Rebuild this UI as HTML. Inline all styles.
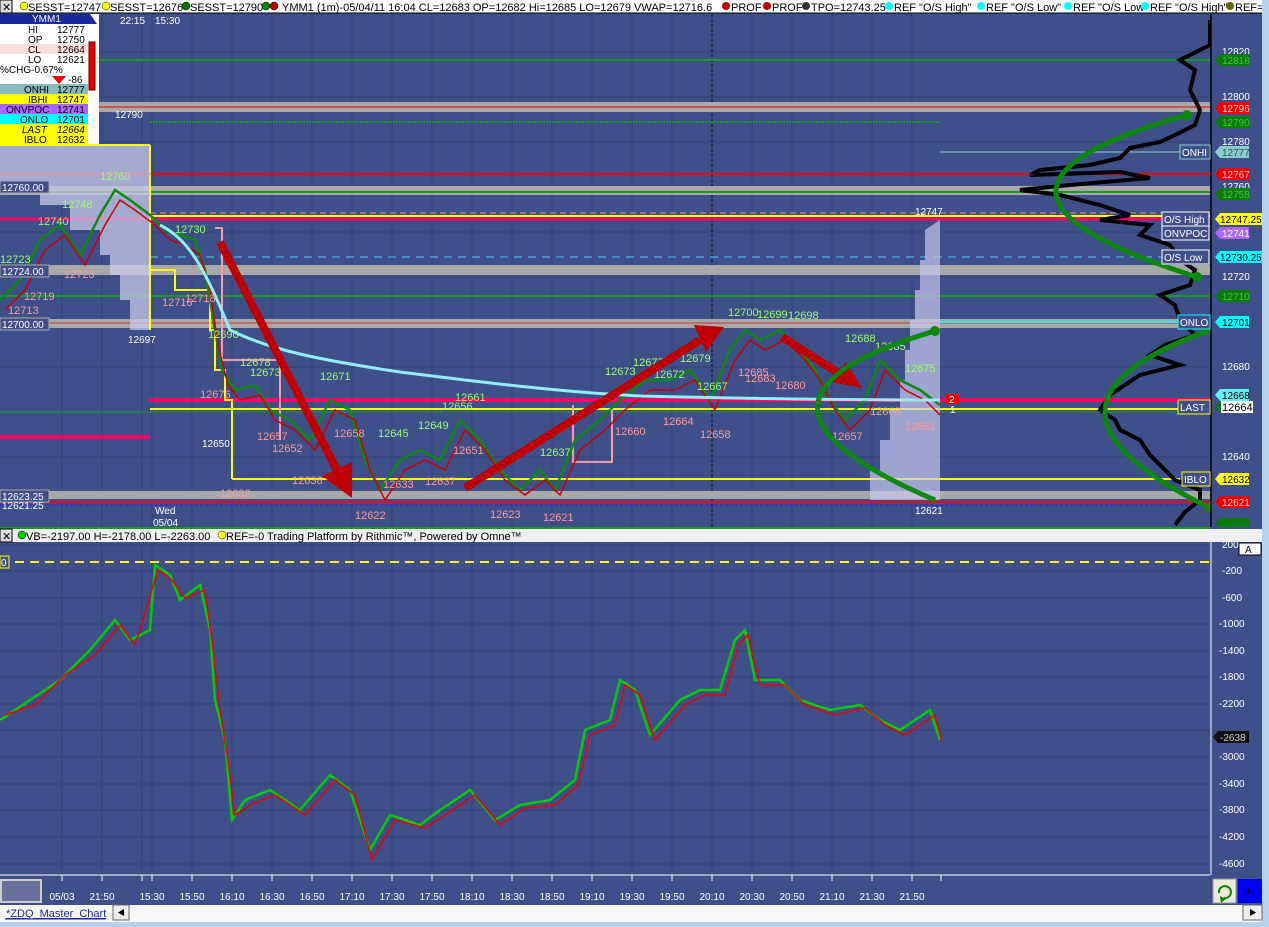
<!DOCTYPE html>
<html><head><meta charset="utf-8"><style>
body{margin:0;width:1269px;height:927px;overflow:hidden;background:#3f4f8a;font-family:"Liberation Sans",sans-serif}
svg{display:block}
text{font-family:"Liberation Sans",sans-serif}
</style></head><body>
<svg width="1269" height="927" viewBox="0 0 1269 927" xmlns="http://www.w3.org/2000/svg">
<rect width="1269" height="927" fill="#3f4f8a"/>
<!-- grids -->
<g stroke="#34427a" stroke-width="1">
<path d="M62 14V875M102 14V875M142 14V875M152 14V875M192 14V875M232 14V875M272 14V875M312 14V875M352 14V875M392 14V875M432 14V875M472 14V875M512 14V875M552 14V875M592 14V875M632 14V875M672 14V875M712 14V875M752 14V875M792 14V875M832 14V875M872 14V875M912 14V875"/>
<path d="M0 52H1210M0 97H1210M0 142H1210M0 187H1210M0 232H1210M0 277H1210M0 322H1210M0 367H1210M0 412H1210M0 457H1210M0 502H1210"/>
<path d="M0 545H1210M0 571H1210M0 598H1210M0 624H1210M0 651H1210M0 677H1210M0 704H1210M0 730H1210M0 757H1210M0 784H1210M0 810H1210M0 837H1210M0 864H1210"/>
</g>
<line x1="712" y1="14" x2="712" y2="527" stroke="#111" stroke-dasharray="3,2"/>
<!-- levels -->
<line x1="0" y1="60" x2="1210" y2="60" stroke="#1a9a1a" stroke-width="2"/>
<rect x="0" y="102" width="1210" height="10" fill="#a8a8a8"/>
<line x1="0" y1="107" x2="1210" y2="107" stroke="#e00" stroke-width="1"/>
<line x1="150" y1="122" x2="940" y2="122" stroke="#1a9a1a" stroke-width="2" stroke-dasharray="2,1"/>
<line x1="940" y1="152" x2="1180" y2="152" stroke="#8cc" stroke-width="1"/>
<line x1="0" y1="174" x2="1210" y2="174" stroke="#f00" stroke-width="2"/>
<rect x="0" y="186" width="1210" height="9" fill="#a8a8a8"/>
<line x1="0" y1="192" x2="1210" y2="192" stroke="#1a9a1a" stroke-width="2"/>
<line x1="150" y1="216" x2="1210" y2="216" stroke="#ff0" stroke-width="2"/>
<line x1="0" y1="219" x2="1210" y2="219" stroke="#f06" stroke-width="3"/>
<line x1="150" y1="213" x2="1210" y2="213" stroke="#e88" stroke-width="1" stroke-dasharray="6,4"/>
<line x1="150" y1="257" x2="1210" y2="257" stroke="#4cf" stroke-width="1" stroke-dasharray="8,6"/>
<rect x="0" y="265" width="1210" height="10" fill="#a8a8a8"/>
<line x1="0" y1="296" x2="1210" y2="296" stroke="#1a9a1a" stroke-width="2"/>
<rect x="0" y="319" width="1210" height="9" fill="#a8a8a8"/>
<line x1="0" y1="323" x2="1210" y2="323" stroke="#c33" stroke-width="1"/>
<line x1="940" y1="322" x2="1180" y2="322" stroke="#0ff" stroke-width="2"/>
<line x1="150" y1="400" x2="1210" y2="400" stroke="#f06" stroke-width="4"/>
<line x1="0" y1="437" x2="150" y2="437" stroke="#f06" stroke-width="4"/>
<line x1="150" y1="409" x2="1180" y2="409" stroke="#ff0" stroke-width="2"/>
<line x1="0" y1="412" x2="1210" y2="412" stroke="#1a9a1a" stroke-width="1"/>
<line x1="232" y1="479" x2="1180" y2="479" stroke="#ff0" stroke-width="2"/>
<rect x="0" y="491" width="1210" height="8" fill="#a8a8a8"/>
<line x1="0" y1="502" x2="1210" y2="502" stroke="#f00" stroke-width="2"/>
<line x1="0" y1="505" x2="1210" y2="505" stroke="#22f" stroke-width="1" stroke-dasharray="3,2"/>
<!-- volume profiles -->
<path d="M0 145H150V330H130V300H120V275H110V255H100V230H70V205H40V185H0Z" fill="#c8c8e8" opacity="0.75"/>
<path d="M940 220V500H870V470H880V440H890V410H900V380H905V350H910V320H915V290H920V260H925V230Z" fill="#c8c8ee" opacity="0.7"/>
<!-- yellow IB -->
<path d="M150 218V270H175V290H210V330H215V370H225V400H232V479" stroke="#ff0" stroke-width="2" fill="none"/>
<path d="M150 145V330M0 145H150" stroke="#ff0" stroke-width="2" fill="none"/>
<path d="M215 228H222V360H280V440M573 405V462H612V410" stroke="#f9a" stroke-width="2" fill="none"/>
<!-- price series -->
<polyline fill="none" stroke="#0b8a0b" stroke-width="2.5" points="0,300 20,280 40,240 60,225 80,255 100,215 115,190 130,200 150,215 165,230 180,235 195,240 205,270 215,330 222,370 235,390 255,385 270,410 290,420 310,440 330,400 350,410 365,460 380,490 400,460 420,450 440,460 460,420 480,440 500,470 520,490 540,470 555,490 575,440 600,420 620,400 645,380 670,380 690,370 710,400 730,350 745,330 760,340 780,330 800,350 815,370 830,400 845,420 865,400 880,360 900,380 920,390 940,405"/>
<polyline fill="none" stroke="#c00" stroke-width="1.5" points="5,310 25,290 45,250 65,235 85,265 105,225 120,200 135,210 155,225 170,240 185,245 200,255 210,290 218,345 228,385 240,400 260,395 275,420 295,430 315,450 335,410 355,420 370,470 385,500 405,470 425,460 445,470 465,430 485,450 505,480 525,495 545,480 560,495 580,450 605,430 625,410 650,390 675,390 695,380 715,410 735,360 750,340 765,350 785,340 805,360 820,380 835,410 850,430 870,410 885,370 905,390 925,400 940,415"/>
<!-- VWAP -->
<path d="M160 225C190 240 205 270 230 330C270 350 320 360 400 372C480 382 560 392 640 396C760 399 860 400 940 400" stroke="#8ef0f8" stroke-width="3" fill="none"/>
<!-- labels on price -->
<g font-size="11" fill="#9f6">
<text x="100" y="180">12760</text><text x="38" y="225">12740</text><text x="62" y="208">12748</text><text x="0" y="263">12723</text><text x="175" y="233">12730</text><text x="208" y="338">12690</text><text x="240" y="366">12678</text><text x="250" y="376">12673</text><text x="320" y="380">12671</text><text x="455" y="401">12661</text><text x="378" y="437">12645</text><text x="418" y="429">12649</text><text x="442" y="410">12656</text><text x="540" y="456">12637</text><text x="605" y="375">12673</text><text x="633" y="366">12677</text><text x="680" y="362">12679</text><text x="697" y="390">12667</text><text x="728" y="316">12700</text><text x="757" y="318">12699</text><text x="788" y="319">12698</text><text x="845" y="342">12688</text><text x="875" y="350">12685</text><text x="905" y="372">12675</text><text x="654" y="378">12672</text>
</g>
<g font-size="11" fill="#f99">
<text x="24" y="300">12719</text><text x="8" y="314">12713</text><text x="64" y="278">12723</text><text x="162" y="306">12716</text><text x="185" y="302">12718</text><text x="200" y="398">12676</text><text x="257" y="440">12657</text><text x="272" y="452">12652</text><text x="334" y="437">12658</text><text x="292" y="484">12638</text><text x="220" y="497">12632</text><text x="355" y="519">12622</text><text x="383" y="488">12633</text><text x="425" y="485">12637</text><text x="453" y="454">12651</text><text x="490" y="518">12623</text><text x="543" y="521">12621</text><text x="615" y="435">12660</text><text x="663" y="425">12664</text><text x="700" y="438">12658</text><text x="738" y="376">12685</text><text x="745" y="382">12683</text><text x="775" y="389">12680</text><text x="832" y="440">12657</text><text x="870" y="415">12668</text><text x="905" y="430">12661</text>
</g>
<g font-size="10" fill="#fff">
<text x="115" y="118">12790</text><text x="128" y="343">12697</text><text x="202" y="447">12650</text><text x="915" y="215">12747</text><text x="915" y="514">12621</text>
<text x="155" y="514">Wed</text><text x="153" y="526">05/04</text>
<text x="120" y="24">22:15</text><text x="155" y="24">15:30</text>
</g>
<!-- arrows -->
<g fill="#c00000" stroke="#c00000">
<line x1="220" y1="242" x2="338" y2="472" stroke-width="8"/><polygon points="352,498 322,476 352,462" stroke="none"/>
<line x1="465" y1="488" x2="700" y2="340" stroke-width="8"/><polygon points="724,327 694,325 706,352" stroke="none"/>
<line x1="782" y1="337" x2="840" y2="374" stroke-width="8"/><polygon points="862,388 846,362 832,382" stroke="none"/>
</g>
<!-- black profile -->
<polyline fill="none" stroke="#000" stroke-width="4" points="1210,20 1210,45 1190,55 1180,60 1195,70 1190,90 1200,110 1195,125 1175,135 1160,142 1130,148 1120,158 1090,165 1040,170 1030,175 1120,172 1150,178 1070,185 1020,190 1060,195 1100,205 1130,215 1100,220 1150,225 1140,235 1170,245 1180,260 1195,270 1190,285 1160,295 1175,305 1180,320 1195,335 1165,345 1150,355 1180,365 1140,375 1125,385 1110,395 1100,410 1115,420 1120,430 1140,440 1150,455 1160,465 1175,480 1200,490 1200,500 1185,512 1175,525"/>
<!-- green parabolas -->
<g fill="none" stroke="#0a8a0a" stroke-width="5">
<path d="M1187 115Q920 190 1197 277"/>
<path d="M1210 330Q1000 405 1210 508"/>
<path d="M935 331Q700 400 935 500"/>
</g>
<g fill="#0a8a0a"><circle cx="1187" cy="115" r="5"/><circle cx="1197" cy="277" r="5"/><circle cx="935" cy="331" r="5"/><circle cx="1210" cy="508" r="5"/></g>
<!-- right axis -->
<rect x="1211" y="12" width="51" height="864" fill="#3f4f8a"/>
<line x1="1211" y1="14" x2="1211" y2="527" stroke="#000" stroke-width="1.5"/>
<line x1="1211" y1="542" x2="1211" y2="875" stroke="#fff" stroke-width="1"/>
<g font-size="10" fill="#fff">
<text x="1222" y="55">12820</text><text x="1222" y="100">12800</text><text x="1222" y="145">12780</text><text x="1222" y="190">12760</text><text x="1222" y="280">12720</text><text x="1222" y="370">12680</text><text x="1222" y="460">12640</text>
<text x="1222" y="548">200</text><text x="1222" y="574">-200</text><text x="1222" y="601">-600</text><text x="1219" y="627">-1000</text><text x="1219" y="654">-1400</text><text x="1219" y="680">-1800</text><text x="1219" y="707">-2200</text><text x="1219" y="760">-3000</text><text x="1219" y="787">-3400</text><text x="1219" y="813">-3800</text><text x="1219" y="840">-4200</text><text x="1219" y="867">-4600</text>
</g>
<g font-size="10">
<polygon points="1215,60 1220,54 1249,54 1249,66 1220,66" fill="#0a7a0a"/><text x="1222" y="64" fill="#3c3">12818</text>
<polygon points="1215,108 1220,102 1249,102 1249,114 1220,114" fill="#e00"/><text x="1222" y="112" fill="#fcc">12796</text>
<polygon points="1215,122 1220,116 1249,116 1249,128 1220,128" fill="#0a7a0a"/><text x="1222" y="126" fill="#3c3">12790</text>
<polygon points="1215,152 1220,146 1249,146 1249,158 1220,158" fill="#8cc"/><text x="1222" y="156" fill="#355">12777</text>
<polygon points="1215,174 1220,168 1249,168 1249,180 1220,180" fill="#e00"/><text x="1222" y="178" fill="#fcc">12767</text>
<polygon points="1215,194 1220,188 1249,188 1249,200 1220,200" fill="#0a7a0a"/><text x="1222" y="198" fill="#3c3">12758</text>
<polygon points="1215,219 1220,213 1262,213 1262,225 1220,225" fill="#ff0"/><text x="1220" y="223" fill="#000">12747.25</text>
<polygon points="1215,233 1220,227 1249,227 1249,239 1220,239" fill="#a6f"/><text x="1222" y="237" fill="#fff">12741</text>
<polygon points="1215,257 1220,251 1262,251 1262,263 1220,263" fill="#0ff"/><text x="1220" y="261" fill="#000">12730.25</text>
<polygon points="1215,296 1220,290 1249,290 1249,302 1220,302" fill="#0a7a0a"/><text x="1222" y="300" fill="#3c3">12710</text>
<polygon points="1215,322 1220,316 1249,316 1249,328 1220,328" fill="#0ff"/><text x="1222" y="326" fill="#000">12701</text>
<polygon points="1215,395 1220,389 1249,389 1249,401 1220,401" fill="#6ee"/><text x="1222" y="399" fill="#000">12668</text>
<polygon points="1215,407 1220,401 1253,401 1253,413 1220,413" fill="#0a7a0a"/><rect x="1221" y="401" width="32" height="12" fill="#fff"/><text x="1222" y="411" fill="#000" font-size="11">12664</text>
<polygon points="1215,479 1220,473 1249,473 1249,485 1220,485" fill="#ff0"/><text x="1222" y="483" fill="#000">12632</text>
<polygon points="1215,502 1220,496 1249,496 1249,508 1220,508" fill="#e00"/><text x="1222" y="506" fill="#fcc">12621</text>
<polygon points="1215,524 1220,518 1249,518 1249,527 1220,527" fill="#0a7a0a"/>
<polygon points="1213,737 1218,731 1249,731 1249,743 1218,743" fill="#111"/><text x="1220" y="741" fill="#ccc">-2638</text>
</g>
<g font-size="10" fill="#fff">
<rect x="1180" y="145" width="30" height="14" fill="#3f4f8a" stroke="#8cc"/><text x="1182" y="156">ONHI</text>
<rect x="1162" y="212" width="47" height="14" fill="#3f4f8a" stroke="#fff"/><text x="1164" y="223">O/S High</text>
<rect x="1162" y="226" width="47" height="14" fill="#3f4f8a" stroke="#fff"/><text x="1164" y="237">ONVPOC</text>
<rect x="1162" y="250" width="47" height="14" fill="#3f4f8a" stroke="#fff"/><text x="1164" y="261">O/S Low</text>
<rect x="1178" y="315" width="32" height="14" fill="#3f4f8a" stroke="#0ff"/><text x="1180" y="326">ONLO</text>
<rect x="1178" y="400" width="32" height="14" fill="#3f4f8a" stroke="#ff0"/><text x="1180" y="411">LAST</text>
<rect x="1182" y="472" width="28" height="14" fill="#3f4f8a" stroke="#ff0"/><text x="1184" y="483">IBLO</text>
<rect x="946" y="394" width="13" height="10" fill="#e00"/><text x="949" y="403">2</text><text x="950" y="413">1</text>
</g>
<!-- left info panel -->
<rect x="0" y="14" width="99" height="130" fill="#fff"/>
<polygon points="0,14 90,14 97,24 0,24" fill="#1a2a9a"/><text x="32" y="22" font-size="10" fill="#fff">YMM1</text>
<g font-size="10" fill="#000">
<rect x="0" y="44" width="88" height="10" fill="#fdd"/>
<rect x="0" y="84" width="88" height="10" fill="#8bb"/>
<rect x="0" y="94" width="88" height="10" fill="#ff0"/>
<rect x="0" y="104" width="88" height="10" fill="#a6f"/>
<rect x="0" y="114" width="88" height="10" fill="#0ff"/>
<rect x="0" y="124" width="88" height="10" fill="#ff0"/>
<rect x="0" y="134" width="88" height="10" fill="#ff0"/>
<text x="28" y="33">HI</text><text x="57" y="33">12777</text>
<text x="28" y="43">OP</text><text x="57" y="43">12750</text>
<text x="28" y="53">CL</text><text x="57" y="53">12664</text>
<text x="28" y="63">LO</text><text x="57" y="63">12621</text>
<text x="0" y="73">%CHG-0.67%</text>
<text x="68" y="83">-86</text>
<text x="24" y="93">ONHI</text><text x="57" y="93">12777</text>
<text x="28" y="103">IBHI</text><text x="57" y="103">12747</text>
<text x="6" y="113">ONVPOC</text><text x="57" y="113">12741</text>
<text x="20" y="123">ONLO</text><text x="57" y="123">12701</text>
<text x="22" y="133" font-style="italic">LAST</text><text x="57" y="133" font-style="italic">12664</text>
<text x="24" y="143">IBLO</text><text x="57" y="143">12632</text>
</g>
<polygon points="52,76 66,76 59,84" fill="#e00"/>
<rect x="89" y="42" width="6" height="48" fill="#e00" stroke="#600"/>
<g font-size="10" fill="#fff">
<rect x="0" y="181" width="49" height="12" fill="#3f4f8a" stroke="#aaa"/><text x="2" y="191">12760.00</text>
<rect x="0" y="265" width="49" height="12" fill="#3f4f8a" stroke="#aaa"/><text x="2" y="275">12724.00</text>
<rect x="0" y="318" width="49" height="12" fill="#3f4f8a" stroke="#aaa"/><text x="2" y="328">12700.00</text>
<rect x="0" y="490" width="49" height="12" fill="#3f4f8a" stroke="#aaa"/><text x="2" y="500">12623.25</text>
<text x="2" y="509">12621.25</text>
</g>
<!-- top header -->
<rect x="0" y="0" width="1262" height="13" fill="#fff"/>
<line x1="0" y1="13" x2="1262" y2="13" stroke="#000"/>
<rect x="0" y="0" width="12" height="13" fill="#ddd" stroke="#000"/><text x="2" y="11" font-size="11">✕</text>
<g font-size="11" fill="#000">
<circle cx="24" cy="6" r="4" fill="#ff0" stroke="#000" stroke-width=".5"/><text x="28" y="11">SESST=12747</text>
<circle cx="106" cy="6" r="4" fill="#ff0" stroke="#000" stroke-width=".5"/><text x="110" y="11">SESST=12676</text>
<circle cx="186" cy="6" r="4" fill="#070" stroke="#000" stroke-width=".5"/><text x="190" y="11">SESST=12790</text>
<circle cx="266" cy="6" r="4" fill="#080" stroke="#000" stroke-width=".5"/><circle cx="274" cy="6" r="4" fill="#b00" stroke="#000" stroke-width=".5"/>
<text x="282" y="11">YMM1 (1m)-05/04/11 16:04 CL=12683 OP=12682 Hi=12685 LO=12679 VWAP=12716.6</text>
<circle cx="726" cy="6" r="4" fill="#b00"/><text x="731" y="11">PROF</text>
<circle cx="767" cy="6" r="4" fill="#b00"/><text x="772" y="11">PROF</text>
<circle cx="806" cy="6" r="4" fill="#333"/><text x="811" y="11">TPO=12743.25</text>
<circle cx="889" cy="6" r="4" fill="#0ff"/><text x="894" y="11">REF "O/S High"</text>
<circle cx="981" cy="6" r="4" fill="#0ff"/><text x="986" y="11">REF "O/S Low"</text>
<circle cx="1068" cy="6" r="4" fill="#0ff"/><text x="1073" y="11">REF "O/S Low"</text>
<circle cx="1145" cy="6" r="4" fill="#0ff"/><text x="1150" y="11">REF "O/S High"</text>
<circle cx="1230" cy="6" r="4" fill="#660"/><text x="1235" y="11">REF=</text>
</g>
<rect x="1262" y="0" width="7" height="927" fill="#b8d0e8"/>
<!-- separator / lower header -->
<line x1="0" y1="528" x2="1210" y2="528" stroke="#1a9a1a" stroke-width="2"/>
<rect x="0" y="529" width="1262" height="13" fill="#f0f0f0"/>
<rect x="0" y="529" width="12" height="13" fill="#ddd" stroke="#000"/><text x="2" y="540" font-size="11">✕</text>
<g font-size="11" fill="#000">
<circle cx="22" cy="535" r="4" fill="#0c0" stroke="#000" stroke-width=".5"/><text x="26" y="540">VB=-2197.00 H=-2178.00 L=-2263.00</text>
<circle cx="222" cy="535" r="4" fill="#ff0" stroke="#000" stroke-width=".5"/><text x="226" y="540">REF=-0  Trading Platform by Rithmic™, Powered by Omne™</text>
</g>
<rect x="1239" y="543" width="22" height="12" fill="#fff" stroke="#000"/><text x="1245" y="553" font-size="10">A</text>
<!-- lower panel -->
<line x1="0" y1="562" x2="1210" y2="562" stroke="#ff0" stroke-width="2" stroke-dasharray="9,6"/>
<rect x="0" y="556" width="9" height="12" fill="#3f4f8a" stroke="#ff0"/><text x="1" y="566" font-size="10" fill="#fff">0</text>
<polyline fill="none" stroke="#0c0" stroke-width="2.5" points="0,720 30,700 60,680 90,650 115,620 130,640 150,630 155,565 170,575 180,600 200,585 210,630 215,700 225,740 232,820 245,800 270,790 300,810 330,775 350,790 370,850 390,815 420,825 440,810 470,790 495,820 520,805 550,800 575,780 585,730 610,720 620,680 635,690 650,735 680,700 700,690 720,690 735,640 745,630 755,680 780,680 800,700 830,710 860,705 880,720 900,730 930,710 940,740"/>
<polyline fill="none" stroke="#e00" stroke-width="1.5" points="5,715 35,705 65,675 95,655 120,625 135,645 158,570 172,580 185,598 205,590 212,640 220,710 228,760 235,815 250,805 275,795 305,815 335,780 355,795 372,860 395,820 425,828 445,815 475,795 500,825 525,808 555,805 578,785 590,735 615,725 625,685 640,695 655,740 685,705 705,695 725,695 738,645 748,635 760,685 785,685 805,705 835,715 865,708 885,725 905,735 935,715 942,742"/>
<!-- time axis -->
<rect x="0" y="875" width="1262" height="30" fill="#3f4f8a"/>
<line x1="0" y1="875" x2="1210" y2="875" stroke="#fff"/>
<rect x="1" y="880" width="40" height="22" fill="#66709a" stroke="#ccc" stroke-width="2"/>
<g stroke="#fff"><path d="M62 875v6M102 875v6M142 875v6M152 875v6M192 875v6M232 875v6M272 875v6M312 875v6M352 875v6M392 875v6M432 875v6M472 875v6M512 875v6M552 875v6M592 875v6M632 875v6M672 875v6M712 875v6M752 875v6M792 875v6M832 875v6M872 875v6M912 875v6M941 875v6"/></g>
<g font-size="10" fill="#fff" text-anchor="middle">
<text x="62" y="900">05/03</text><text x="102" y="900">21:50</text><text x="152" y="900">15:30</text><text x="192" y="900">15:50</text><text x="232" y="900">16:10</text><text x="272" y="900">16:30</text><text x="312" y="900">16:50</text><text x="352" y="900">17:10</text><text x="392" y="900">17:30</text><text x="432" y="900">17:50</text><text x="472" y="900">18:10</text><text x="512" y="900">18:30</text><text x="552" y="900">18:50</text><text x="592" y="900">19:10</text><text x="632" y="900">19:30</text><text x="672" y="900">19:50</text><text x="712" y="900">20:10</text><text x="752" y="900">20:30</text><text x="792" y="900">20:50</text><text x="832" y="900">21:10</text><text x="872" y="900">21:30</text><text x="912" y="900">21:50</text>
</g>
<rect x="1213" y="879" width="23" height="24" fill="#ece9d8" stroke="#999"/>
<path d="M1219 893a6 6 0 1 1 5 5" stroke="#080" stroke-width="2" fill="none"/><polygon points="1220,896 1226,899 1221,903" fill="#080"/>
<rect x="1238" y="879" width="24" height="24" fill="#00f"/><text x="1245" y="895" font-size="12">+</text>
<!-- tab bar -->
<rect x="0" y="905" width="1262" height="17" fill="#f7f7f7"/>
<rect x="0" y="922" width="1262" height="5" fill="#b8d0e8"/>
<text x="6" y="917" font-size="11" fill="#1a2a9a" text-decoration="underline">*ZDQ_Master_Chart</text>
<line x1="5" y1="919" x2="105" y2="919" stroke="#1a2a9a"/>
<rect x="113" y="905" width="16" height="15" fill="#eee" stroke="#666"/><polygon points="124,909 118,912.5 124,916" fill="#000"/>
<rect x="1243" y="905" width="19" height="15" fill="#eee" stroke="#666"/><polygon points="1250,909 1256,912.5 1250,916" fill="#000"/>
</svg>
</body></html>
